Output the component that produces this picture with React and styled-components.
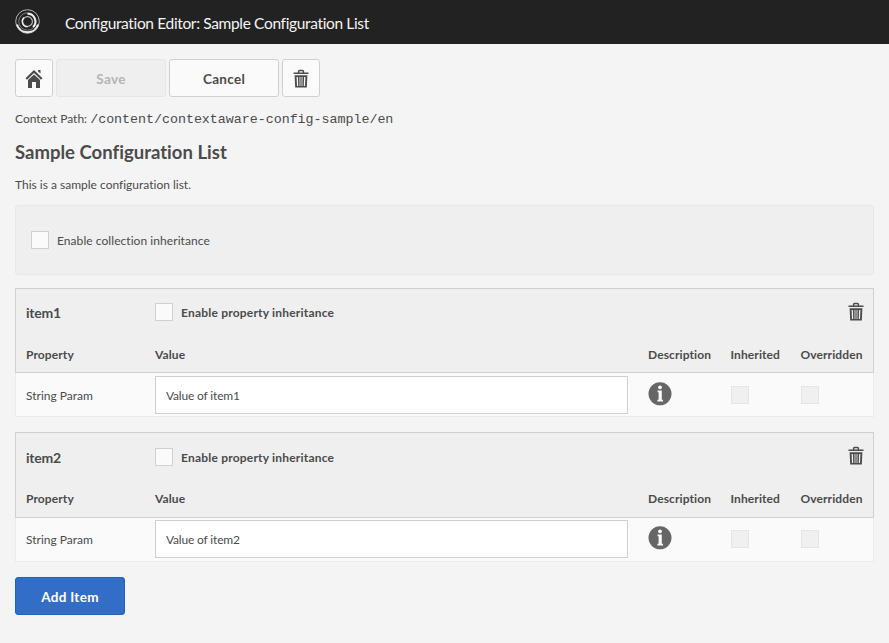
import React from "react";
import styled, { createGlobalStyle } from "styled-components";

const Global = createGlobalStyle`
  *, *::before, *::after { box-sizing: border-box; }
  body {
    margin: 0;
    background: #f4f4f4;
    color: #4b4b4b;
    font: 12px/18px Lato, "Noto Sans", sans-serif;
    font-variant-ligatures: none;
  }
`;

const Header = styled.header`
  display: flex;
  align-items: center;
  height: 44px;
  padding: 2px 0 0 15px;
  gap: 25px;
  background: #222;
  color: #f4f4f4;
  font-size: 15.5px;
  letter-spacing: -0.35px;
`;

const Logo = styled.svg`
  width: 25px;
  height: 25px;
  margin-top: -3px;
  fill: none;
`;

const Main = styled.main`
  padding: 15px 15px 28px;
`;

const Toolbar = styled.div`
  display: flex;
  gap: 3px;
`;

const Button = styled.button`
  display: flex;
  align-items: center;
  justify-content: center;
  width: ${({ $square }) => ($square ? 38 : 110)}px;
  height: 38px;
  padding: ${({ $square }) => ($square ? "2px 0 0" : "2px 0 0")};
  border: 1px solid ${({ $primary }) => ($primary ? "#1f62bb" : "#d0d0d0")};
  border-radius: 3px;
  background: ${({ $primary }) => ($primary ? "#326ec8" : "#fafafa")};
  color: ${({ $primary }) => ($primary ? "#fff" : "#4b4b4b")};
  font: 700 13.5px/18px Lato, "Noto Sans", sans-serif;
  letter-spacing: 0.3px;

  &:disabled {
    border-color: #e6e6e6;
    background: #efefef;
    color: #b5b5b5;
  }
`;

const ContextPath = styled.p`
  margin: 13px 0 0;
  height: 18px;
  white-space: pre;
`;

const Code = styled.code`
  font: 13.33px/18px "Liberation Mono", monospace;
  letter-spacing: -0.02px;
`;

const Title = styled.h2`
  margin: 11px 0 0;
  font-size: 18.5px;
  line-height: 26px;
  letter-spacing: 0.02px;
`;

const Intro = styled.p`
  margin: 11px 0 0;
`;

const InheritPanel = styled.section`
  display: flex;
  align-items: center;
  height: 70px;
  margin-top: 11px;
  padding-left: 15px;
  border: 1px solid #e8e8e8;
  border-radius: 3px;
  background: #efefef;
`;

const CheckLabel = styled.label`
  display: flex;
  align-items: center;
  gap: 8px;
  font-weight: ${({ $bold }) => ($bold ? 700 : 400)};
  letter-spacing: ${({ $bold }) => ($bold ? 0.2 : 0.06)}px;
`;

const LabelText = styled.span`
  padding-top: 2px;
`;

const Checkbox = styled.input.attrs({ type: "checkbox" })`
  appearance: none;
  width: 18px;
  height: 18px;
  margin: 0;
  border: 1px solid #d0d0d0;
  background: #fafafa;

  &:disabled {
    border-color: #e5e5e5;
    background: #f0f0f0;
  }
`;

const Item = styled.section`
  margin-top: ${({ $first }) => ($first ? 13 : 15)}px;
`;

const columns = "129px 493px 82.5px 70px 1fr";

const ItemHead = styled.div`
  height: ${({ $tall }) => ($tall ? 86 : 85)}px;
  border: 1px solid #d0d0d0;
  background: #efefef;
`;

const GlyphSvg = styled.svg`
  display: block;
  width: 18px;
  height: 20px;
  fill: #4b4b4b;
`;

const ItemBar = styled.div`
  display: grid;
  grid-template-columns: 129px 1fr auto;
  align-items: center;
  height: 46px;
  padding: ${({ $low }) => ($low ? 2 : 0)}px 8px 0 10px;

  > ${GlyphSvg} {
    margin-bottom: ${({ $low }) => ($low ? 2 : 0)}px;
  }
`;

const ItemName = styled.h3`
  margin: 0;
  padding-top: 2px;
  font-size: 14px;
  line-height: 18px;
  letter-spacing: -0.2px;
`;

const ColumnRow = styled.div`
  display: grid;
  grid-template-columns: ${columns};
  padding: 11px 0 0 10px;
  font-weight: 700;
  letter-spacing: 0.1px;
`;

const PropertyRow = styled.div`
  display: grid;
  grid-template-columns: ${columns};
  align-items: start;
  height: 44px;
  padding: ${({ $raised }) => ($raised ? 2 : 3)}px 0 0 10px;
  border: solid #ebebeb;
  border-width: 0 1px 1px;
  background: #fafafa;

  ${Checkbox} { margin-top: 10px; }
`;

const PropertyName = styled.span`
  padding-top: 11px;
`;

const TextField = styled.input`
  width: 473px;
  height: 38px;
  padding: 1px 10px 0;
  border: 1px solid #d0d0d0;
  background: #fff;
  color: #4b4b4b;
  font: 12px/18px Lato, "Noto Sans", sans-serif;
  letter-spacing: -0.17px;
`;

const InfoSvg = styled.svg`
  width: 24px;
  height: 24px;
  margin: 6px 0 0 0.3px;
`;

const AddRow = styled.div`
  margin-top: 15px;
`;

const HomeIcon = () => (
  <GlyphSvg viewBox="0 0 18 20">
    <path d="M9 1 17.5 9.2 16 10.7 9 4 2 10.7 .5 9.2ZM13 1H15.5V4.5L13 2.4Z" />
    <path d="M3 11 9 5.5 15 11V19H11V13H7V19H3Z" />
  </GlyphSvg>
);

const TrashIcon = () => (
  <GlyphSvg viewBox="0 0 18 20">
    <path d="M1.5 3.5H5.8V2.5Q5.8 .8 7.5 .8H10.5Q12.2 .8 12.2 2.5V3.5H16.5V5.1H1.5ZM7.3 3.5H10.7V2.6Q10.7 2.2 10.3 2.2H7.7Q7.3 2.2 7.3 2.6Z" />
    <path
      fillRule="evenodd"
      d="M2.6 6.2H15.4L14.8 18.6H3.2ZM4.6 8 5 17H6.2L5.9 8ZM7.5 8 7.6 17H8.4V8ZM9.6 8V17H10.4L10.5 8ZM12.1 8 11.8 17H13L13.4 8Z"
    />
  </GlyphSvg>
);

const InfoIcon = () => (
  <InfoSvg viewBox="0 0 24 24">
    <circle cx="12" cy="11.8" r="11.5" fill="#666" />
    <circle cx="12" cy="5.3" r="1.9" fill="#fafafa" />
    <path d="M9.6 8.6H13.8V17.8H15V19.4H9.4V17.8H10.6V10.2H9.6Z" fill="#fafafa" />
  </InfoSvg>
);

const BrandLogo = () => (
  <Logo viewBox="0 0 25 25">
    <circle cx="12.5" cy="12.5" r="11.8" stroke="#b4b4b4" strokeWidth="1" />
    <path d="M2 15.5A11 11 0 0 0 23 15.5" stroke="#eee" strokeWidth="1.9" />
    <circle cx="12.5" cy="12.5" r="8.7" stroke="#8c8c8c" strokeWidth=".9" />
    <path d="M12.5 4.8A7.7 7.7 0 0 1 18 18" stroke="#f2f2f2" strokeWidth="1.9" />
    <circle cx="12.5" cy="12.5" r="4.9" stroke="#c4c4c4" strokeWidth="1.1" />
    <path d="M12.5 17.8A5.3 5.3 0 0 1 9 8.6" stroke="#eee" strokeWidth="1.4" />
  </Logo>
);

const ConfigItem = ({ name, first }) => (
  <Item $first={first}>
    <ItemHead $tall={!first}>
      <ItemBar $low={!first}>
        <ItemName>{name}</ItemName>
        <CheckLabel $bold>
          <Checkbox />
          <LabelText>Enable property inheritance</LabelText>
        </CheckLabel>
        <TrashIcon />
      </ItemBar>
      <ColumnRow>
        <span>Property</span>
        <span>Value</span>
        <span>Description</span>
        <span>Inherited</span>
        <span>Overridden</span>
      </ColumnRow>
    </ItemHead>
    <PropertyRow $raised={!first}>
      <PropertyName>String Param</PropertyName>
      <TextField defaultValue={`Value of ${name}`} />
      <InfoIcon />
      <Checkbox disabled />
      <Checkbox disabled />
    </PropertyRow>
  </Item>
);

export default function App() {
  return (
    <>
      <Global />
      <Header>
        <BrandLogo />
        <span>Configuration Editor: Sample Configuration List</span>
      </Header>
      <Main>
        <Toolbar>
          <Button $square aria-label="Home"><HomeIcon /></Button>
          <Button disabled>Save</Button>
          <Button>Cancel</Button>
          <Button $square aria-label="Delete"><TrashIcon /></Button>
        </Toolbar>
        <ContextPath>
          Context Path: <Code>/content/contextaware-config-sample/en</Code>
        </ContextPath>
        <Title>Sample Configuration List</Title>
        <Intro>This is a sample configuration list.</Intro>
        <InheritPanel>
          <CheckLabel>
            <Checkbox />
            <LabelText>Enable collection inheritance</LabelText>
          </CheckLabel>
        </InheritPanel>
        <ConfigItem name="item1" first />
        <ConfigItem name="item2" />
        <AddRow>
          <Button $primary>Add Item</Button>
        </AddRow>
      </Main>
    </>
  );
}
